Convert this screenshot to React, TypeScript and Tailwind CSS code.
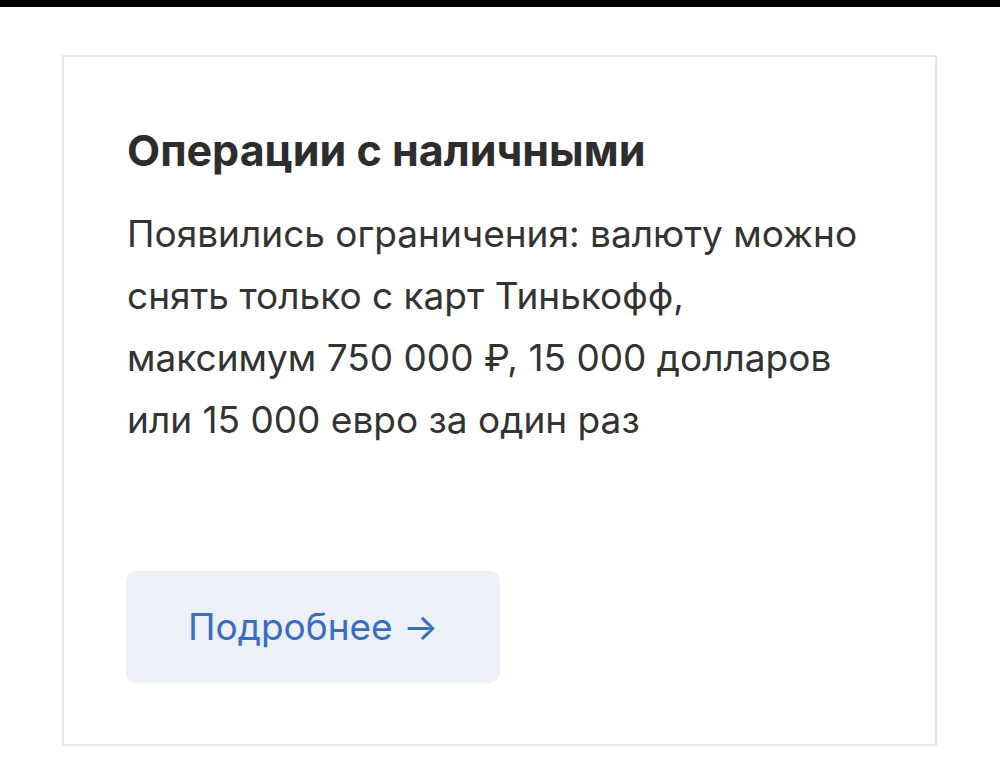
export default function App() {
  return (
    <div className="min-h-[765px] w-[1000px] bg-white" style={{ fontFamily: "Inter, Roboto, 'Noto Sans', sans-serif" }}>
      <div className="h-[7px] bg-black" />
      <div className="pl-[62px] pt-[48px]">
        <div className="w-[875px] h-[691px] border-2 border-[#e8e8e8] pl-[63px] pt-[69px] flex flex-col">
          <h2 className="text-[43px] leading-[48px] font-bold text-[#2d2d2d]">Операции с наличными</h2>
          <p className="mt-[29px] text-[37px] leading-[62px] text-[#333333]">
            Появились ограничения: валюту можно
            <br />
            снять только с карт Тинькофф,
            <br />
            максимум 750 000 ₽, 15 000 долларов
            <br />
            или 15 000 евро за один раз
          </p>
          <div className="mt-[120px] -ml-[1px]">
            <div className="w-[374px] h-[112px] rounded-[10px] bg-[#ebf0f9] flex items-center pl-[62px] text-[37px] text-[#3b6cc3]">
              Подробнее →
            </div>
          </div>
        </div>
      </div>
    </div>
  );
}
